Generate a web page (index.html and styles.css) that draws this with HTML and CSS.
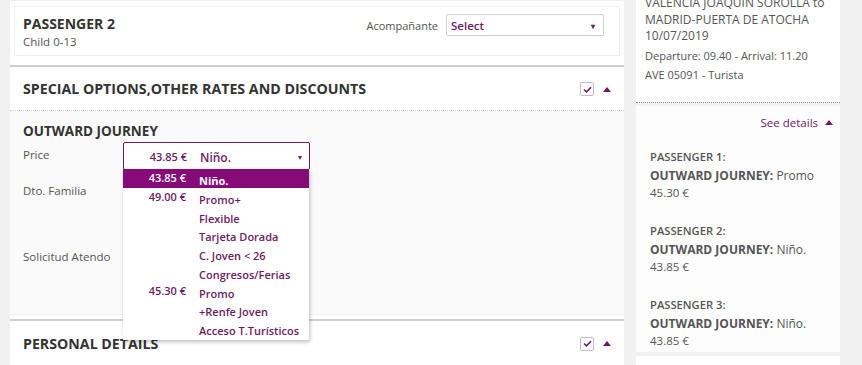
FILE: index.html
```html
<!DOCTYPE html>
<html lang="en">
<head>
  <meta charset="UTF-8" />
  <title>Passengers</title>
  <link rel="stylesheet" href="styles.css">
</head>
<body>
  <div class="page">
    <main class="main">
      <section class="passenger">
        <div class="passenger-info">
          <h2>PASSENGER 2</h2>
          <div class="sub">Child 0-13</div>
        </div>
        <label class="companion">Acompañante
          <span class="select"><span>Select</span><span class="caret">&#9662;</span></span>
        </label>
      </section>

      <section class="panel">
        <header class="panel-head">
          <h3>SPECIAL OPTIONS,OTHER RATES AND DISCOUNTS</h3>
          <div class="tools">
            <span class="check"><svg width="9" height="7" viewBox="0 0 9 7"><path d="M1 3.5 L3.5 5.8 L8 1.2" fill="none" stroke="#6d1a63" stroke-width="1.6"/></svg></span>
            <span class="up"></span>
          </div>
        </header>
        <div class="panel-body">
          <h4>OUTWARD JOURNEY</h4>
          <div class="row row-price">
            <div class="label">Price</div>
            <div class="fare-select">
              <div class="fare-box">
                <span class="amount">43.85 €</span><span class="name">Niño.</span><span class="caret">&#9662;</span>
              </div>
              <ul class="fare-list">
                <li class="selected"><span class="amount">43.85 €</span><span class="name">Niño.</span></li>
                <li><span class="amount">49.00 €</span><span class="name">Promo+</span></li>
                <li><span class="amount"></span><span class="name">Flexible</span></li>
                <li><span class="amount"></span><span class="name">Tarjeta Dorada</span></li>
                <li><span class="amount"></span><span class="name">C. Joven &lt; 26</span></li>
                <li><span class="amount"></span><span class="name">Congresos/Ferias</span></li>
                <li><span class="amount">45.30 €</span><span class="name">Promo</span></li>
                <li><span class="amount"></span><span class="name">+Renfe Joven</span></li>
                <li><span class="amount"></span><span class="name">Acceso T.Turísticos</span></li>
              </ul>
            </div>
          </div>
          <div class="row row-family">
            <div class="label">Dto. Familia</div>
          </div>
          <div class="row row-request">
            <div class="label">Solicitud Atendo</div>
          </div>
        </div>
      </section>

      <section class="panel panel-last">
        <header class="panel-head">
          <h3>PERSONAL DETAILS</h3>
          <div class="tools">
            <span class="check"><svg width="9" height="7" viewBox="0 0 9 7"><path d="M1 3.5 L3.5 5.8 L8 1.2" fill="none" stroke="#6d1a63" stroke-width="1.6"/></svg></span>
            <span class="up"></span>
          </div>
        </header>
      </section>
    </main>

    <aside class="aside">
      <div class="trip">
        <div class="route">VALENCIA JOAQUIN SOROLLA to<br>MADRID-PUERTA DE ATOCHA<br>10/07/2019</div>
        <div class="times">Departure: 09.40 - Arrival: 11.20</div>
        <div class="times">AVE 05091 - Turista</div>
      </div>
      <div class="summary">
        <div class="see">See details <span class="up"></span></div>
        <div class="pax">
          <div class="pax-title">PASSENGER 1:</div>
          <div><b>OUTWARD JOURNEY:</b> Promo</div>
          <div class="price">45.30 €</div>
        </div>
        <div class="pax">
          <div class="pax-title">PASSENGER 2:</div>
          <div><b>OUTWARD JOURNEY:</b> Niño.</div>
          <div class="price">43.85 €</div>
        </div>
        <div class="pax">
          <div class="pax-title">PASSENGER 3:</div>
          <div><b>OUTWARD JOURNEY:</b> Niño.</div>
          <div class="price">43.85 €</div>
        </div>
      </div>
      <div class="next-card"></div>
    </aside>
  </div>
</body>
</html>
```

FILE: styles.css
```css
html, body {
  margin: 0;
  padding: 0;
  background: #f1f1f1;
  font-family: 'Open Sans', sans-serif;
  color: #555;
  font-size: 12px;
  overflow: hidden;
}

.page {
  display: flex;
  align-items: flex-start;
  padding-left: 10px;
  height: 365px;
}

/* Main column */
.main {
  width: 614px;
  background: #fff;
  padding-top: 3px;
  border-top: 1px solid #eee;
}

.passenger {
  margin: 2px 4px 0;
  height: 48px;
  border: 1px solid #f0f0f0;
  display: flex;
  justify-content: space-between;
  align-items: flex-start;
  padding: 0 0 0 8px;
}

.passenger h2 {
  margin: 7px 0 0;
  font-size: 14px;
  font-weight: 700;
  color: #333;
  line-height: 20px;
}

.passenger .sub {
  font-size: 11.5px;
  line-height: 15px;
  color: #555;
}

.companion {
  display: flex;
  align-items: center;
  gap: 8px;
  margin: 7px 15px 0 0;
  font-size: 11px;
  color: #555;
}

.select {
  width: 144px;
  height: 20px;
  border: 1px solid #d0d0d0;
  border-radius: 2px;
  display: flex;
  align-items: center;
  justify-content: space-between;
  padding: 0 8px 0 4px;
  font-weight: 600;
  font-size: 11.5px;
  color: #6d1a63;
  background: #fff;
}

.caret {
  font-size: 8px;
  color: #6d1a63;
}

.panel {
  border-top: 2px solid #cfcfcf;
}

.passenger + .panel {
  margin-top: 9px;
}

.panel-head {
  height: 43px;
  display: flex;
  align-items: center;
  justify-content: space-between;
  padding: 0 13px;
  border-bottom: 1px dotted #cfcfcf;
  background: #fff;
}

.panel-head h3 {
  margin: 0;
  font-size: 14.2px;
  font-weight: 700;
  color: #333;
}

.tools {
  display: flex;
  align-items: center;
  gap: 9px;
  margin-top: 1px;
}

.check {
  width: 12px;
  height: 12px;
  border: 1px solid #c9b8c6;
  border-radius: 2px;
  display: flex;
  align-items: center;
  justify-content: center;
  background: #fff;
}

.up {
  display: inline-block;
  width: 0;
  height: 0;
  border-left: 4px solid transparent;
  border-right: 4px solid transparent;
  border-bottom: 5px solid #6d1a63;
}

.panel-body {
  background: #fafafa;
  padding: 11px 13px 0;
  height: 192px;
  border-bottom: 1px solid #f0f0f0;
  margin-bottom: 4px;
}

.panel-body h4 {
  margin: 0 0 5px;
  font-size: 13.5px;
  font-weight: 700;
  color: #333;
  line-height: 18px;
}

.row {
  display: flex;
  align-items: flex-start;
}

.label {
  width: 100px;
  font-size: 11.5px;
  color: #555;
  line-height: 18px;
}

.row-price {
  height: 36px;
}

.row-price .label {
  padding-top: 1px;
}

.row-family {
  height: 66px;
  padding-top: 1px;
}

.fare-select {
  position: relative;
  width: 187px;
  margin-top: -3px;
}

.fare-box {
  height: 26px;
  border: 1px solid #6d1a63;
  border-radius: 2px;
  background: #fff;
  display: flex;
  align-items: center;
  padding-right: 7px;
}

.amount {
  width: 63px;
  text-align: right;
  font-weight: 600;
  color: #6d1a63;
  font-size: 11px;
  flex-shrink: 0;
}

.name {
  margin-left: 13px;
  font-weight: 600;
  color: #6d1a63;
  font-size: 11px;
  flex: 1;
}

.fare-box .name {
  font-size: 12px;
  margin-top: 2px;
}

.fare-list {
  position: absolute;
  top: 27px;
  left: 0;
  width: 186px;
  margin: 0;
  padding: 0 0 2px;
  list-style: none;
  background: #fff;
  box-shadow: 1px 2px 4px rgba(0, 0, 0, 0.25);
  z-index: 2;
}

.fare-list li {
  display: flex;
  align-items: center;
  height: 18.8px;
}

.fare-list li .name {
  margin-top: 4px;
}

.fare-list li .amount {
  margin-top: -2px;
}

.fare-list .selected {
  background: #860b79;
}

.fare-list .selected .amount,
.fare-list .selected .name {
  color: #fff;
}

.fare-list .selected .name {
  font-weight: 700;
}

.panel-last .panel-head {
  height: 44px;
}

/* Right column */
.aside {
  width: 208px;
  margin-left: 10px;
}

.trip {
  background: #fff;
  padding: 0 2px 0 9px;
  height: 107px;
  border-bottom: 1px dotted #888;
  margin: 0 2px;
  line-height: 17px;
}

.route {
  margin-top: -5px;
  line-height: 16.5px;
}

.times {
  line-height: 19px;
  font-size: 11px;
}

.route + .times {
  margin-top: 1px;
}

.summary {
  background: #fdfdfd;
  border: 1px solid #f2f2f2;
  margin: 2px 1px 0;
  height: 246px;
  padding: 0 0 0 14px;
}

.see {
  text-align: right;
  color: #6d1a63;
  font-size: 11.5px;
  padding: 8px 7px 0 0;
  line-height: 18px;
  height: 18px;
}

.see .up {
  margin-left: 4px;
  vertical-align: 2px;
}

.pax {
  line-height: 17px;
  margin-top: 16px;
  height: 54px;
}

.pax + .pax {
  margin-top: 20px;
}

.pax-title {
  font-weight: 600;
  font-size: 11.2px;
  margin-bottom: 2px;
}

.pax b {
  font-weight: 700;
}

.price {
  font-size: 11.5px;
}

.next-card {
  background: #fff;
  height: 10px;
  margin: 3px 2px 0;
}
```
